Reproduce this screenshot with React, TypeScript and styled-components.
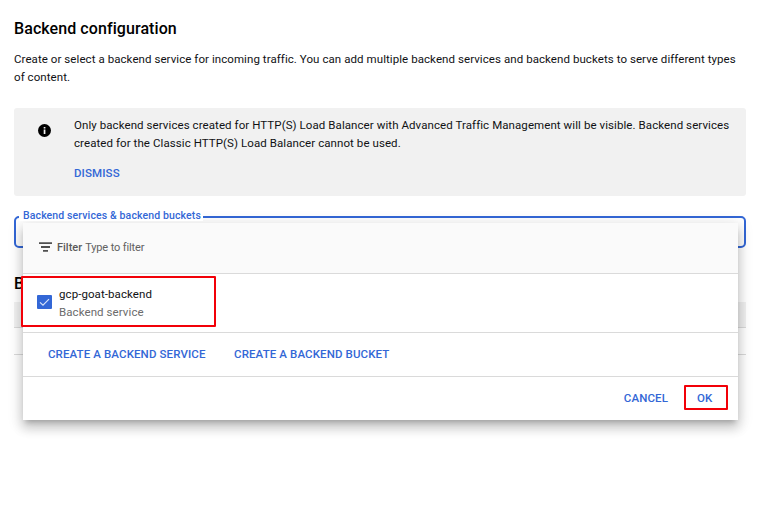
import React from "react";
import styled, { createGlobalStyle } from "styled-components";

const GlobalStyle = createGlobalStyle`
  * { box-sizing: border-box; }
  body {
    margin: 0;
    background: #fff;
    color: #101114;
    font-family: Roboto, "Liberation Sans", sans-serif;
    font-size: 11.5px;
  }
`;

const Page = styled.main`
  width: 768px;
  height: 514px;
  padding: 19px 22px 0 14px;
  overflow: hidden;
`;

const Title = styled.h1`
  margin: 0;
  font-size: 16px;
  line-height: 20px;
  font-weight: 500;
  letter-spacing: 0.08px;
  color: #000;
`;

const Description = styled.p`
  margin: 11px 0 0;
  line-height: 18px;
  letter-spacing: 0.07px;
  white-space: nowrap;
`;

const Notice = styled.section`
  display: flex;
  height: 88px;
  margin-top: 22px;
  padding: 8px 10px 0 24px;
  border-radius: 3px;
  background: #f1f1f1;
`;

const InfoIcon = styled.svg`
  flex: none;
  width: 13px;
  height: 13px;
  margin: 8px 23px 0 0;
`;

const NoticeText = styled.p`
  margin: 0 0 12px;
  line-height: 18px;
  letter-spacing: 0.078px;
  white-space: nowrap;
`;

const TextButton = styled.button`
  display: block;
  padding: 0;
  border: 0;
  background: none;
  color: #3367d6;
  font: 500 11.5px/18px Roboto, "Liberation Sans", sans-serif;
  letter-spacing: 0.11px;
  white-space: nowrap;
`;

const Field = styled.div`
  position: relative;
  height: 32px;
  margin-top: 20px;
  border: 2px solid #3367d6;
  border-radius: 5px;
`;

const FieldLabel = styled.label`
  position: absolute;
  z-index: 2;
  top: -9px;
  left: 3px;
  height: 12px;
  padding: 0 2px 0 4px;
  background: #fff;
  color: #3367d6;
  font-size: 10.5px;
  line-height: 13px;
  font-weight: 500;
  letter-spacing: 0.12px;
  white-space: nowrap;
`;

const Panel = styled.div`
  position: absolute;
  z-index: 1;
  top: 5px;
  left: 7px;
  width: 715px;
  height: 197px;
  background: #fff;
  box-shadow: 0 5px 5px -3px rgba(0, 0, 0, 0.2),
    0 8px 10px 1px rgba(0, 0, 0, 0.14), 0 3px 14px 2px rgba(0, 0, 0, 0.12);
`;

const FilterBar = styled.div`
  display: flex;
  align-items: center;
  height: 51px;
  padding: 0 0 2px 16px;
  border-bottom: 1px solid #dadada;
  background: #fafafa;
  color: #616161;
  font-size: 11px;
  letter-spacing: -0.12px;
`;

const FilterIcon = styled.svg`
  width: 13px;
  height: 10px;
  margin-right: 5px;
`;

const FilterName = styled.span`
  margin-right: 3px;
  font-weight: 500;
  letter-spacing: 0;
  color: #5a5a5a;
`;

const OptionRow = styled.div`
  position: relative;
  display: flex;
  height: 59px;
  padding: 11px 0 0 14px;
  border-bottom: 1px solid #dadada;
`;

const Checkbox = styled.svg`
  width: 15px;
  height: 14px;
  margin: 10px 7px 0 0;
`;

const OptionText = styled.div`
  line-height: 18px;
  letter-spacing: 0.08px;
  color: #101114;
`;

const OptionType = styled.div`
  color: #6b6b6b;
`;

const Highlight = styled.span`
  position: absolute;
  top: 2px;
  left: -2px;
  width: 195px;
  height: 51px;
  border: 2px solid #f20008;
  border-radius: 1px;
`;

const CreateActions = styled.div`
  display: flex;
  align-items: center;
  gap: 28.5px;
  height: 44px;
  padding: 0 0 2px 25px;
  border-bottom: 1px solid #dadada;
`;

const Footer = styled.div`
  display: flex;
  align-items: center;
  justify-content: flex-end;
  gap: 16px;
  height: 43px;
  padding: 0 10px 2px 0;
`;

const ConfirmFrame = styled.div`
  display: flex;
  align-items: center;
  width: 44px;
  height: 25px;
  padding: 0 0 0 11px;
  border: 2px solid #f20008;
  border-radius: 1px;
`;

const RulesTitle = styled.h2`
  margin: 26px 0 0;
  font-size: 16px;
  line-height: 20px;
  font-weight: 500;
  color: #000;
`;

const TableHead = styled.div`
  height: 26px;
  margin-top: 8px;
  border-bottom: 1px solid #dadada;
  background: #f1f1f1;
`;

const TableRow = styled.div`
  height: 27px;
  border-bottom: 1px solid #dadada;
`;

export default function App() {
  return (
    <>
      <GlobalStyle />
      <Page>
        <Title>Backend configuration</Title>
        <Description>
          Create or select a backend service for incoming traffic. You can add multiple backend services and backend buckets to serve different types
          <br />
          of content.
        </Description>
        <Notice>
          <InfoIcon viewBox="0 0 13 13">
            <circle cx="6.5" cy="6.5" r="6.5" fill="#000" />
            <path d="M5.7 3h1.7v1.5H5.7zM5.7 5.5h1.7V10H5.7z" fill="#f1f1f1" />
          </InfoIcon>
          <div>
            <NoticeText>
              Only backend services created for HTTP(S) Load Balancer with Advanced Traffic Management will be visible. Backend services
              <br />
              created for the Classic HTTP(S) Load Balancer cannot be used.
            </NoticeText>
            <TextButton>DISMISS</TextButton>
          </div>
        </Notice>
        <Field>
          <FieldLabel>Backend services &amp; backend buckets</FieldLabel>
          <Panel>
            <FilterBar>
              <FilterIcon viewBox="0 0 13 10">
                <path d="M0 .2h13v1.9H0zM2 4h9v2H2zM4 7.9h5v1.9H4z" fill="#505050" />
              </FilterIcon>
              <FilterName>Filter</FilterName>
              <span>Type to filter</span>
            </FilterBar>
            <OptionRow>
              <Checkbox viewBox="0 0 15 14">
                <rect width="15" height="14" rx="1" fill="#3367d6" />
                <path d="M3 7.3l3 2.9 6-6.1" fill="none" stroke="#d9e4fa" strokeWidth="1.15" />
              </Checkbox>
              <OptionText>
                gcp-goat-backend
                <OptionType>Backend service</OptionType>
              </OptionText>
              <Highlight />
            </OptionRow>
            <CreateActions>
              <TextButton>CREATE A BACKEND SERVICE</TextButton>
              <TextButton>CREATE A BACKEND BUCKET</TextButton>
            </CreateActions>
            <Footer>
              <TextButton>CANCEL</TextButton>
              <ConfirmFrame>
                <TextButton>OK</TextButton>
              </ConfirmFrame>
            </Footer>
          </Panel>
        </Field>
        <RulesTitle>B</RulesTitle>
        <TableHead />
        <TableRow />
      </Page>
    </>
  );
}
